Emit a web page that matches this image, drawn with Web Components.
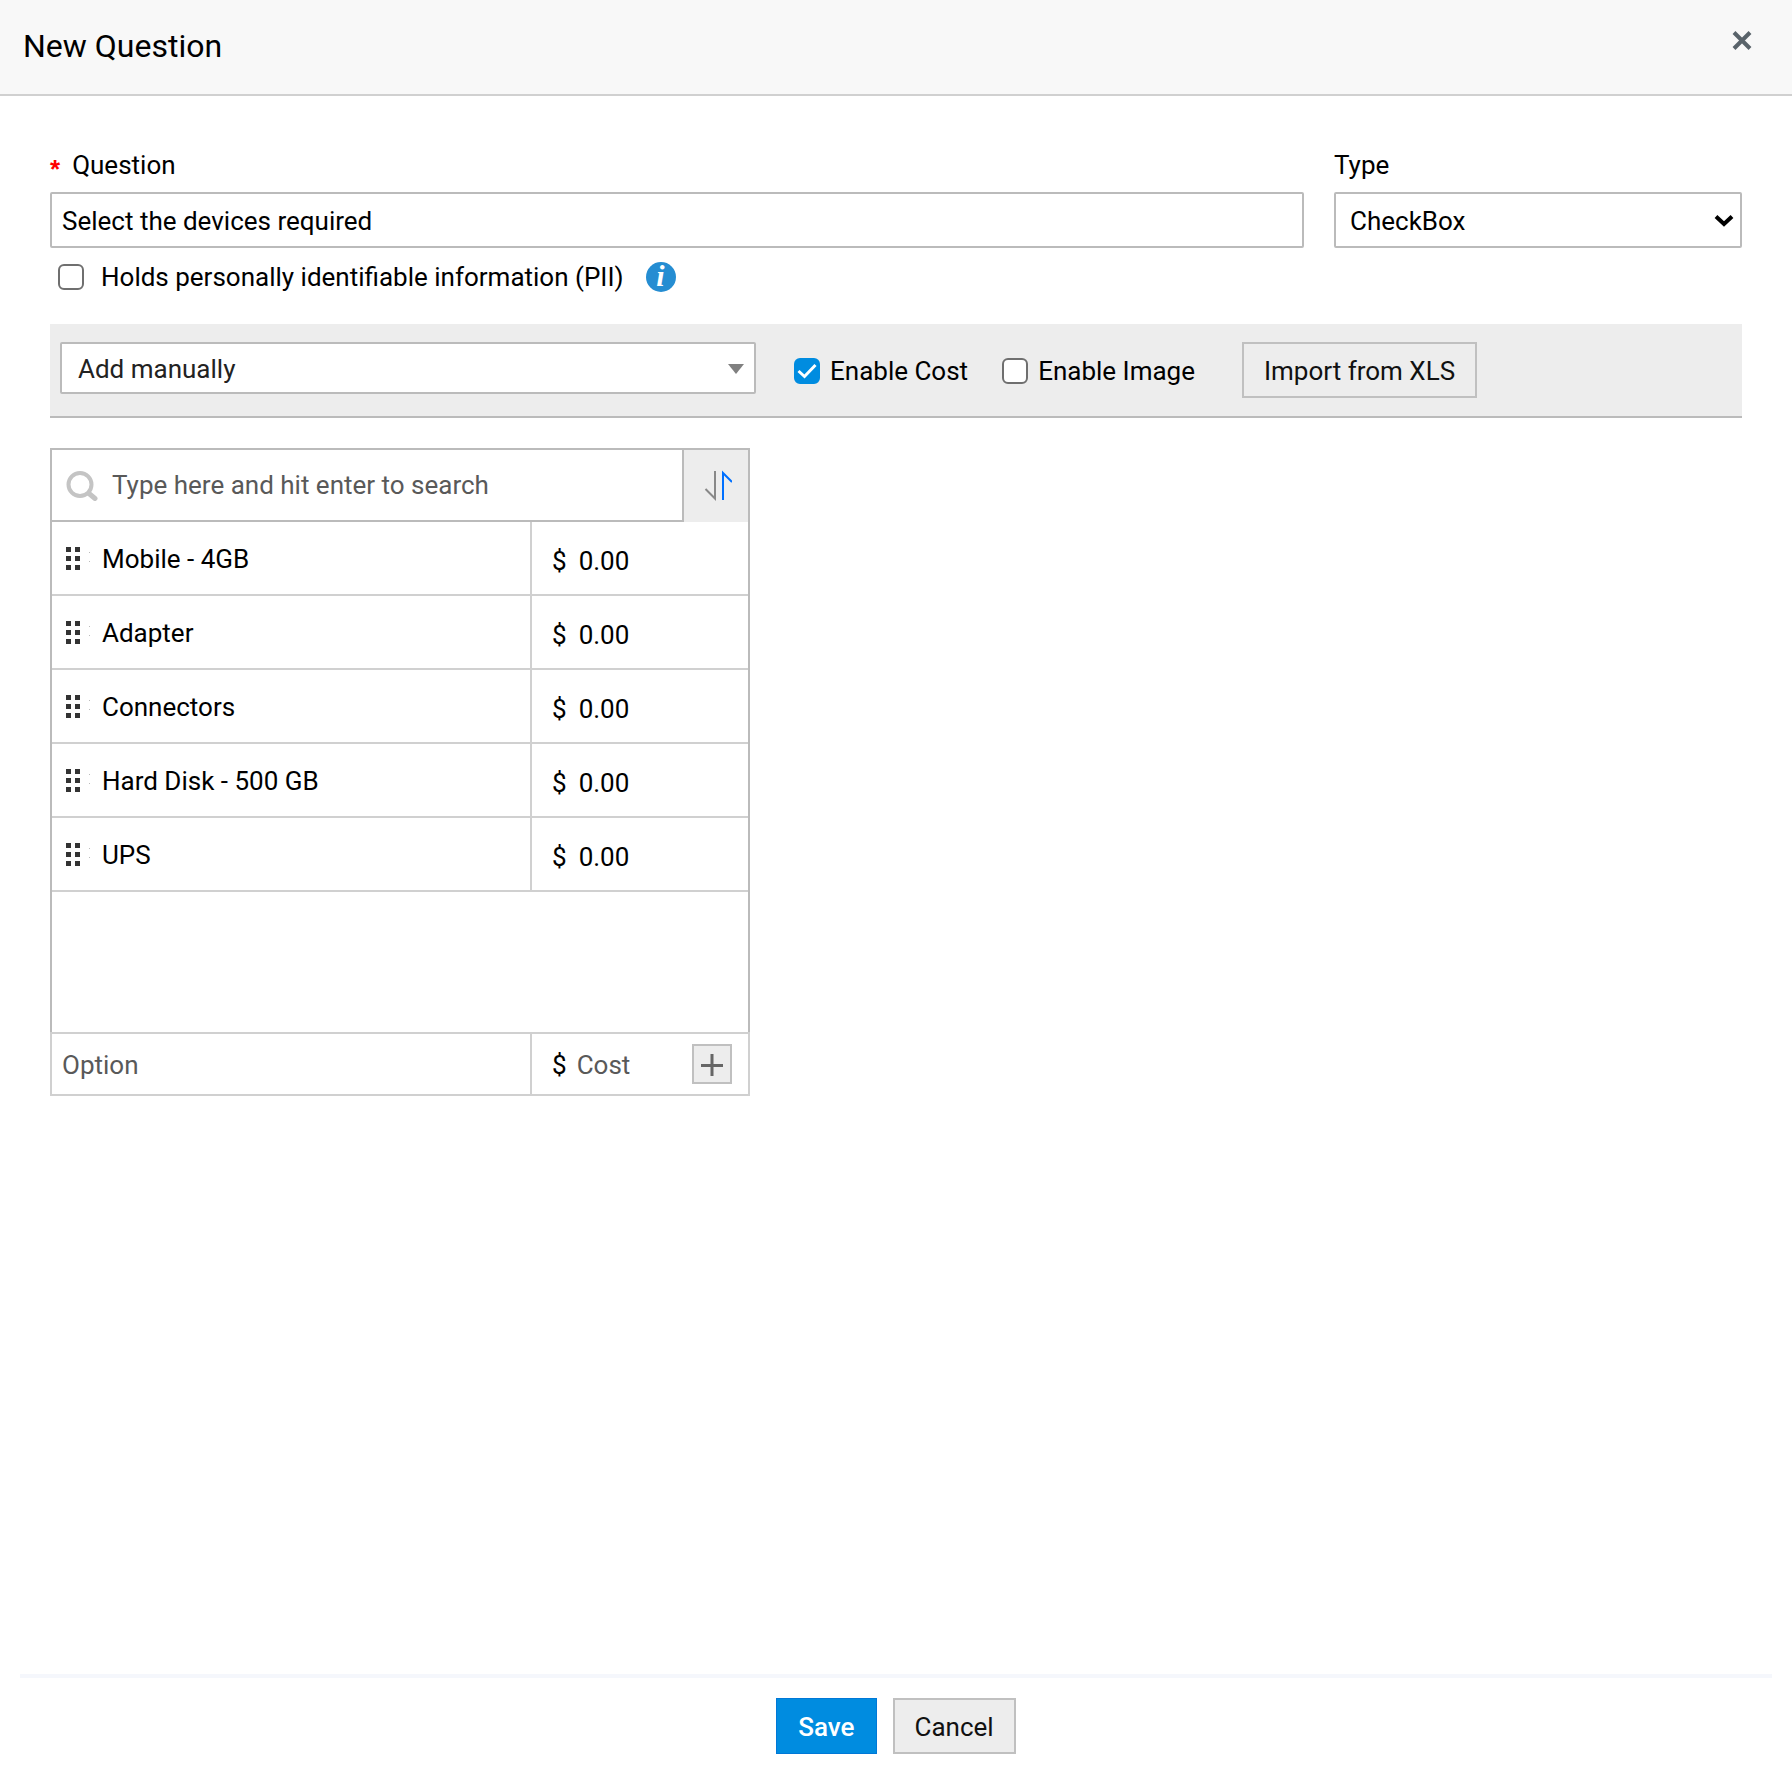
<!DOCTYPE html>
<html lang="en">
<head>
<meta charset="utf-8">
<meta name="viewport" content="width=device-width, initial-scale=1">
<title>New Question</title>
<style>
    body {
        margin: 0;
        background-color: #fff;
        color: #000;
        font: 26px/30px Roboto, "Liberation Sans", sans-serif;
        --line: #bbb;
        --line-light: #d0d0d0;
        --panel: #ededed;
        --accent: #008ce0;
    }
</style>
</head>
<body>
<question-dialog></question-dialog>

<script>
class DialogHeader extends HTMLElement {
    constructor() {
        super();
        this.shadowDOM = this.attachShadow({mode: 'open'});
    }

    connectedCallback() {
        this.render();
    }

    render() {
        this.shadowDOM.innerHTML = `
            <style>
            :host {
                display: block;
                background-color: #f8f8f8;
                border-bottom: 2px solid var(--line-light);
            }

            header {
                display: flex;
                justify-content: space-between;
                align-items: flex-start;
                padding: 26px 36px 28px 23px;
            }

            h1 {
                margin: 0;
                font-size: 32px;
                line-height: 40px;
                font-weight: 400;
            }

            button {
                display: flex;
                padding: 0;
                border: 0;
                background: none;
                cursor: pointer;
            }
            </style>

            <header>
                <h1><slot></slot></h1>
                <button type="button" aria-label="Close">
                    <svg width="28" height="28" viewBox="0 0 28 28" fill="none" stroke="#59636a" stroke-width="4">
                        <path d="M6 6.500l16 16M22 6.500l-16 16"/>
                    </svg>
                </button>
            </header>
            `;
    }
}

class TextField extends HTMLElement {
    constructor() {
        super();
        this.shadowDOM = this.attachShadow({mode: 'open'});
    }

    connectedCallback() {
        this.render();
    }

    render() {
        this.shadowDOM.innerHTML = `
            <style>
            :host {
                display: block;
            }

            label {
                display: flex;
                gap: 12px;
                height: 30px;
                margin-bottom: 12px;
            }

            .required {
                color: #f00;
                font: bold 26px/38px "Liberation Sans", sans-serif;
            }

            input {
                display: block;
                box-sizing: border-box;
                width: 100%;
                height: 56px;
                padding: 2px 10px 0;
                border: 2px solid var(--line);
                border-radius: 2px;
                background-color: #fff;
                color: inherit;
                font: inherit;
            }
            </style>

            <label for="field"><span class="required">*</span><span>${this.getAttribute('label')}</span></label>
            <input id="field" type="text" required value="${this.getAttribute('value')}">
            `;
    }
}

class SelectField extends HTMLElement {
    constructor() {
        super();
        this.shadowDOM = this.attachShadow({mode: 'open'});
    }

    connectedCallback() {
        this.render();
    }

    get value() {
        return this.shadowDOM.querySelector('select').value;
    }

    render() {
        const label = this.getAttribute('label');
        const compact = this.hasAttribute('compact');
        const options = this.getAttribute('options').split(',');

        this.shadowDOM.innerHTML = `
            <style>
            :host {
                display: block;
            }

            label {
                display: block;
                margin-bottom: 12px;
            }

            .box {
                display: grid;
                align-items: center;
            }

            select, svg {
                grid-area: 1 / 1;
            }

            select {
                appearance: none;
                box-sizing: border-box;
                width: 100%;
                height: 56px;
                padding: 2px 40px 0 14px;
                border: 2px solid var(--line);
                border-radius: 2px;
                background-color: #fff;
                color: inherit;
                font: inherit;
            }

            svg {
                justify-self: end;
                margin-right: 7px;
                pointer-events: none;
            }

            :host([compact]) select {
                height: 52px;
                padding-left: 16px;
                color: #222;
            }

            :host([compact]) svg {
                margin-right: 10px;
            }
            </style>

            ${compact ? '' : `<label for="field">${label}</label>`}
            <div class="box">
                <select id="field" ${compact ? `aria-label="${label}"` : ''}>
                    ${options.map(option => `<option>${option}</option>`).join('')}
                </select>
                ${compact
                    ? '<svg width="20" height="12" viewBox="0 0 20 12"><path d="M2 2h16l-8 10z" fill="#808080"/></svg>'
                    : '<svg width="22" height="16" viewBox="0 0 22 16"><path d="M3 4.500l8 7.500 8-7.500" fill="none" stroke="#000" stroke-width="4"/></svg>'}
            </div>
            `;
    }
}

class CheckOption extends HTMLElement {
    constructor() {
        super();
        this.shadowDOM = this.attachShadow({mode: 'open'});
    }

    connectedCallback() {
        this.render();
    }

    render() {
        this.shadowDOM.innerHTML = `
            <style>
            :host {
                display: block;
            }

            label {
                display: flex;
                align-items: center;
                gap: var(--check-gap, 10px);
            }

            .box {
                display: grid;
            }

            input, svg {
                grid-area: 1 / 1;
                width: 26px;
                height: 26px;
            }

            input {
                appearance: none;
                box-sizing: border-box;
                margin: 0;
                border: 2px solid #6f6f6f;
                border-radius: 6px;
                background-color: #fff;
            }

            input:checked {
                border-color: var(--accent);
                background-color: var(--accent);
            }

            svg {
                visibility: hidden;
                pointer-events: none;
            }

            input:checked + svg {
                visibility: visible;
            }
            </style>

            <label>
                <span class="box">
                    <input type="checkbox" ${this.hasAttribute('checked') ? 'checked' : ''}>
                    <svg viewBox="0 0 26 26" fill="none" stroke="#fff" stroke-width="3"><path d="M4.500 13l6 5.500L21.500 7"/></svg>
                </span>
                <span>${this.getAttribute('label')}</span>
            </label>
            `;
    }
}

class InfoBadge extends HTMLElement {
    constructor() {
        super();
        this.shadowDOM = this.attachShadow({mode: 'open'});
    }

    connectedCallback() {
        this.render();
    }

    render() {
        this.shadowDOM.innerHTML = `
            <style>
            :host {
                display: flex;
                justify-content: center;
                width: 30px;
                height: 30px;
                border-radius: 50%;
                background-color: #258dd2;
                color: #fff;
                font: italic bold 30px/28px "Liberation Serif", serif;
            }
            </style>
            <span>i</span>
            `;
    }
}

class PushButton extends HTMLElement {
    constructor() {
        super();
        this.shadowDOM = this.attachShadow({mode: 'open'});
    }

    connectedCallback() {
        this.render();
    }

    render() {
        this.shadowDOM.innerHTML = `
            <style>
            :host {
                display: block;
            }

            button {
                display: block;
                box-sizing: border-box;
                height: 56px;
                padding: 2px 20px 0;
                border: 2px solid #c0c0c0;
                background-color: var(--panel);
                color: #111;
                font: inherit;
                cursor: pointer;
            }

            :host([primary]) button {
                border: 1px solid #0078d7;
                padding: 2px 21px 0;
                background-color: var(--accent);
                color: #fff;
                font-weight: 500;
            }
            </style>
            <button type="button"><slot></slot></button>
            `;
    }
}

class OptionList extends HTMLElement {
    constructor() {
        super();
        this.shadowDOM = this.attachShadow({mode: 'open'});
        this._options = [];
    }

    connectedCallback() {
        this.render();
    }

    set options(options) {
        this._options = options;
        this.render();
    }

    renderRow(option) {
        return `
            <tr>
                <td>
                    <div class="name">
                        <svg width="28" height="24" viewBox="0 0 28 24" fill="#333">
                            <path d="M0 0h5v5H0zM9 0h5v5H9zM0 9h5v5H0zM9 9h5v5H9zM0 18h5v5H0zM9 18h5v5H9z"/>
                            <path d="M23 5h1v1h-1zM23 14h1v1h-1z" fill="#bbb"/>
                        </svg>
                        <span>${option.name}</span>
                    </div>
                </td>
                <td>
                    <div class="cost">
                        <span>$</span>
                        <input type="text" aria-label="Cost of ${option.name}" value="${option.cost}">
                    </div>
                </td>
            </tr>
            `;
    }

    render() {
        this.shadowDOM.innerHTML = `
            <style>
            :host {
                display: block;
                width: 700px;
                max-width: 100%;
            }

            .list {
                min-height: 582px;
                border: 2px solid var(--line);
                border-bottom: 0;
            }

            .search {
                display: grid;
                grid-template-columns: 1fr 64px;
                height: 72px;
            }

            .search label {
                display: flex;
                align-items: center;
                gap: 14px;
                padding-left: 14px;
                border-right: 2px solid var(--line);
                border-bottom: 2px solid var(--line);
            }

            input {
                flex: 1;
                min-width: 0;
                padding: 0;
                border: 0;
                outline: 0;
                background: none;
                color: inherit;
                font: inherit;
            }

            input::placeholder {
                color: #595959;
                opacity: 1;
            }

            button {
                display: flex;
                align-items: center;
                justify-content: center;
                padding: 0;
                border: 0;
                background-color: var(--panel);
                cursor: pointer;
            }

            table {
                width: 100%;
                table-layout: fixed;
                border-spacing: 0;
            }

            td {
                box-sizing: border-box;
                height: 74px;
                padding: 0;
                border-bottom: 2px solid var(--line-light);
            }

            td:first-child {
                border-right: 2px solid var(--line-light);
            }

            td:last-child {
                width: 216px;
            }

            .name, .cost {
                display: flex;
                align-items: center;
            }

            .name {
                gap: 8px;
                padding: 2px 0 0 14px;
            }

            .cost {
                gap: 12px;
                padding: 6px 16px 0 20px;
            }

            .new-option {
                display: grid;
                grid-template-columns: 1fr 216px;
                height: 60px;
                border: 2px solid var(--line-light);
            }

            .new-option > input {
                padding: 2px 0 0 10px;
                border-right: 2px solid var(--line-light);
            }

            .new-option > .cost {
                padding: 0 16px 0 20px;
                gap: 10px;
            }

            .new-option .cost span, .new-option .cost input {
                padding-top: 2px;
            }

            .add {
                box-sizing: border-box;
                width: 40px;
                height: 40px;
                border: 2px solid #c0c0c0;
            }
            </style>

            <div class="list">
                <div class="search">
                    <label>
                        <svg width="32" height="32" viewBox="0 0 32 32" fill="none" stroke="#c4c4c4">
                            <circle cx="14" cy="15.500" r="11.500" stroke-width="4"/>
                            <path d="M23 24.500l6 5" stroke-width="5" stroke-linecap="round"/>
                        </svg>
                        <input type="search" aria-label="Search options" placeholder="Type here and hit enter to search">
                    </label>
                    <button type="button" aria-label="Sort">
                        <svg width="32" height="32" viewBox="0 0 32 32" fill="none" stroke-width="2">
                            <path d="M15 1v27.500L5.500 19" stroke="#888"/>
                            <path d="M23 30V3l9 9" stroke="#0070ff"/>
                        </svg>
                    </button>
                </div>
                <table aria-label="Options">
                    <tbody>${this._options.map(option => this.renderRow(option)).join('')}</tbody>
                </table>
            </div>
            <div class="new-option">
                <input type="text" aria-label="Option" placeholder="Option">
                <div class="cost">
                    <span>$</span>
                    <input type="text" aria-label="Cost" placeholder="Cost">
                    <button class="add" type="button" aria-label="Add option">
                        <svg width="24" height="24" viewBox="0 0 24 24" stroke="#666" stroke-width="3">
                            <path d="M12 2v22M1 13.500h22"/>
                        </svg>
                    </button>
                </div>
            </div>
            `;
    }
}

class QuestionDialog extends HTMLElement {
    constructor() {
        super();
        this.shadowDOM = this.attachShadow({mode: 'open'});
    }

    connectedCallback() {
        this.render();
    }

    render() {
        this.shadowDOM.innerHTML = `
            <style>
            :host {
                display: flex;
                flex-direction: column;
                min-height: 100vh;
            }

            main {
                flex: 1;
                padding: 54px 50px 40px;
            }

            .fields {
                display: grid;
                grid-template-columns: minmax(0, 1fr) 408px;
                gap: 30px;
            }

            .pii {
                --check-gap: 17px;
                display: flex;
                align-items: center;
                gap: 22px;
                margin: 14px 0 32px;
                padding-left: 8px;
            }

            .toolbar {
                display: flex;
                flex-wrap: wrap;
                align-items: center;
                padding: 18px 10px;
                border-bottom: 2px solid var(--line);
                background-color: var(--panel);
            }

            .toolbar select-field {
                align-self: flex-start;
                width: 696px;
                max-width: 100%;
                margin-right: 38px;
            }

            .toolbar check-option {
                margin-right: 34px;
                padding-top: 2px;
            }

            .toolbar push-button {
                margin-left: 13px;
            }

            option-list {
                margin-top: 30px;
            }

            footer {
                display: flex;
                justify-content: center;
                gap: 16px;
                margin: 0 20px;
                padding: 20px 0 36px;
                border-top: 4px solid #f5f7fc;
            }
            </style>

            <dialog-header>New Question</dialog-header>
            <main>
                <div class="fields">
                    <text-field label="Question" value="Select the devices required"></text-field>
                    <select-field label="Type" options="CheckBox"></select-field>
                </div>
                <div class="pii">
                    <check-option label="Holds personally identifiable information (PII)"></check-option>
                    <info-badge></info-badge>
                </div>
                <div class="toolbar">
                    <select-field compact label="Option source" options="Add manually"></select-field>
                    <check-option label="Enable Cost" checked></check-option>
                    <check-option label="Enable Image"></check-option>
                    <push-button>Import from XLS</push-button>
                </div>
                <option-list></option-list>
            </main>
            <footer>
                <push-button primary>Save</push-button>
                <push-button>Cancel</push-button>
            </footer>
            `;

        this.shadowDOM.querySelector('option-list').options = [
            {name: 'Mobile - 4GB', cost: '0.00'},
            {name: 'Adapter', cost: '0.00'},
            {name: 'Connectors', cost: '0.00'},
            {name: 'Hard Disk - 500 GB', cost: '0.00'},
            {name: 'UPS', cost: '0.00'}
        ];
    }
}

customElements.define('dialog-header', DialogHeader);
customElements.define('text-field', TextField);
customElements.define('select-field', SelectField);
customElements.define('check-option', CheckOption);
customElements.define('info-badge', InfoBadge);
customElements.define('push-button', PushButton);
customElements.define('option-list', OptionList);
customElements.define('question-dialog', QuestionDialog);
</script>
</body>
</html>
